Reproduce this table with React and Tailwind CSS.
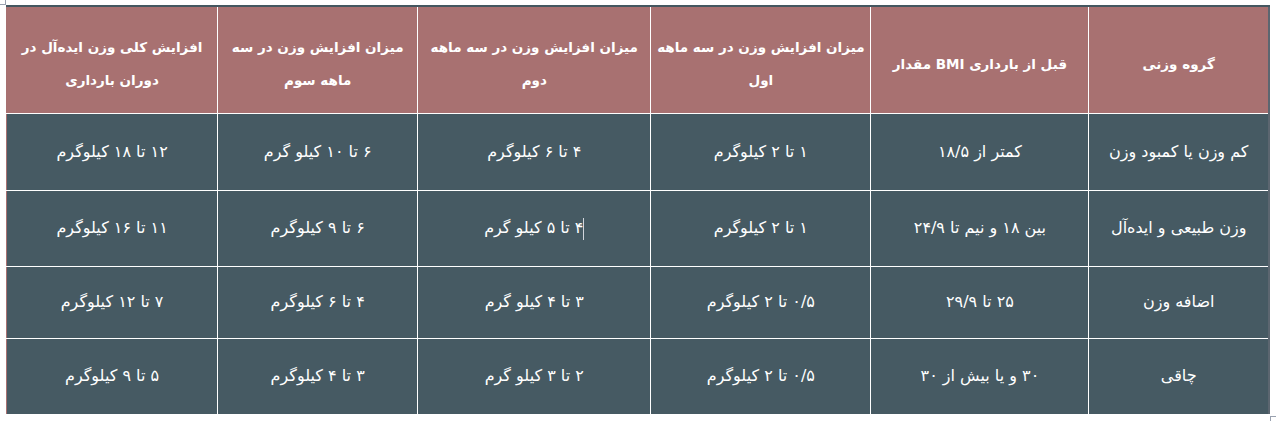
const headers = [
  ['گروه وزنی'],
  ['قبل از بارداری BMI مقدار'],
  ['میزان افزایش وزن در سه ماهه', 'اول'],
  ['میزان افزایش وزن در سه ماهه', 'دوم'],
  ['میزان افزایش وزن در سه', 'ماهه سوم'],
  ['افزایش کلی وزن ایده‌آل در', 'دوران بارداری'],
];

const rows = [
  ['کم وزن یا کمبود وزن', 'کمتر از ۱۸/۵', '۱ تا ۲ کیلوگرم', '۴ تا ۶ کیلوگرم', '۶ تا ۱۰ کیلو گرم', '۱۲ تا ۱۸ کیلوگرم'],
  ['وزن طبیعی و ایده‌آل', 'بین ۱۸ و نیم تا ۲۴/۹', '۱ تا ۲ کیلوگرم', 'cursor', '۶ تا ۹ کیلوگرم', '۱۱ تا ۱۶ کیلوگرم'],
  ['اضافه وزن', '۲۵ تا ۲۹/۹', '۰/۵ تا ۲ کیلوگرم', '۳ تا ۴ کیلو گرم', '۴ تا ۶ کیلوگرم', '۷ تا ۱۲ کیلوگرم'],
  ['چاقی', '۳۰ و یا بیش از ۳۰', '۰/۵ تا ۲ کیلوگرم', '۲ تا ۳ کیلو گرم', '۳ تا ۴ کیلوگرم', '۵ تا ۹ کیلوگرم'],
];

const widths = ['w-[180px]', 'w-[218px]', 'w-[220px]', 'w-[233px]', 'w-[200px]', 'w-[211px]'];
const rowHeights = ['h-[77px]', 'h-[76px]', 'h-[72px]', 'h-[76px]'];

export default function App() {
  return (
    <div className="relative w-[1277px] h-[421px] bg-white font-['DejaVu_Sans',sans-serif]">
      {/* word table handles */}
      <div className="absolute left-0 top-0 w-[6px] h-[5px] border-r border-b border-gray-400"></div>
      <div className="absolute left-[1270px] top-[416px] w-[6px] h-[5px] border-l border-t border-gray-400"></div>

      <div className="pt-[5px] pl-[6px]">
        <table dir="rtl" className="table-fixed border-collapse w-[1264px] border-t-2 border-t-[#445760] border-r-2 border-r-[#5c6670] border-l border-l-[#a87171]">
          <colgroup>
            {widths.map((w, i) => (
              <col key={i} className={w} />
            ))}
          </colgroup>
          <thead>
            <tr className="h-[107px] bg-[#a87171]">
              {headers.map((h, i) => (
                <th
                  key={i}
                  className="border-l border-b border-white last:border-l-0 text-white text-[13.5px] font-bold leading-[33px] text-center align-middle pt-[9px]"
                >
                  {h.map((line, j) => (
                    <div key={j}>{line}</div>
                  ))}
                </th>
              ))}
            </tr>
          </thead>
          <tbody>
            {rows.map((r, ri) => (
              <tr key={ri} className={`${rowHeights[ri]} bg-[#465a63]`}>
                {r.map((c, ci) => (
                  <td
                    key={ci}
                    className={`border-l border-white last:border-l-0 text-white text-[16px] text-center align-middle ${
                      ri < rows.length - 1 ? 'border-b' : ''
                    }`}
                  >
                    {c === 'cursor' ? (
                      <span>
                        <span className="inline-block w-px h-[22px] bg-gray-300 align-middle"></span>
                        ۴ تا ۵ کیلو گرم
                      </span>
                    ) : (
                      c
                    )}
                  </td>
                ))}
              </tr>
            ))}
          </tbody>
        </table>
      </div>
    </div>
  );
}
